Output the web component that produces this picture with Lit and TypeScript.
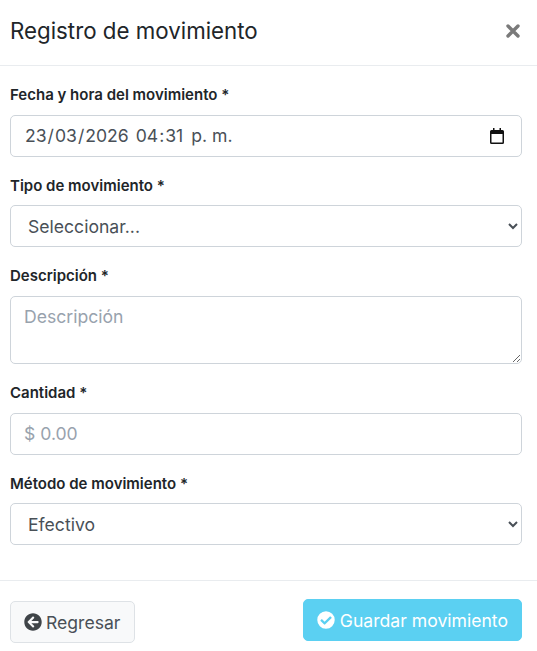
import { LitElement, html, css } from "lit";
import { customElement } from "lit/decorators.js";

@customElement("app-root")
export class AppRoot extends LitElement {
  static styles = css`
    :host { display: block; width: 537px; height: 651px; background: #fff; font-family: Inter, sans-serif; color: #212529; overflow: hidden; }
    * { box-sizing: border-box; }
    .head { height: 66px; border-bottom: 1px solid #e9ecef; display: flex; align-items: center; justify-content: space-between; padding: 0 16px 4px 10px; }
    h1 { margin: 0; font-size: 22.3px; font-weight: 400; }
    .close { width: 16px; height: 16px; }
    .body { padding: 20px 15px 0 10px; display: flex; flex-direction: column; }
    label { display: block; font-size: 15px; font-weight: 600; line-height: 17.5px; margin-bottom: 11px; }
    .ctl { display: block; width: 100%; border: 1px solid #ced4da; border-radius: 5px; height: 42px; font: inherit; font-size: 17.6px; color: #495057; margin: 0 0 20px; background: #fff; outline: none; }
    .ctl::placeholder { color: #98a2ad; opacity: 1; }
    .date { display: flex; align-items: center; justify-content: space-between; padding: 0 16px 0 13px; }
    .segs { white-space: pre; }
    .segs span { padding: 0 1px; }
    .segs .ampm { padding: 0 1px 0 2px; }
    .select { padding: 0 0 0 13px; }
    .area { height: 68.6px; padding: 9px 13px; resize: vertical; }
    .ph { padding: 0 13px; }
    .foot { border-top: 1px solid #e9ecef; display: flex; justify-content: space-between; align-items: flex-start; padding: 18px 15px 0 10px; margin-top: 15px; }
    .btn { font-size: 17.6px; border-radius: 5px; display: flex; align-items: center; gap: 5px; font-family: inherit; height: 42px; }
    .back { padding: 0 13px; gap: 4px; background: #f8f9fa; border: 1px solid #dee2e6; color: #495057; margin-top: 2px; }
    .save { padding: 0 13px; background: #5bd0f2; border: 1px solid #5bd0f2; color: #fff; }
    svg { display: block; flex: none; }
  `;

  render() {
    return html`
      <div class="head">
        <h1>Registro de movimiento</h1>
        <svg class="close" viewBox="0 0 16 16"><path d="M3 3l10 10M13 3L3 13" stroke="#7a7a7a" stroke-width="3.4" stroke-linecap="round"/></svg>
      </div>
      <div class="body">
        <label>Fecha y hora del movimiento *</label>
        <div class="ctl date"><div class="segs"><span>23</span>/<span>03</span>/<span>2026</span> <span>04</span>:<span>31</span> <span class="ampm">p. m.</span></div>
          <svg width="16" height="16" viewBox="0 0 16 16"><path fill="#111" d="M4 0h1.5v2h5V0H12v2h1.500A1.500 1.500 0 0 1 15 3.500v11a1.500 1.500 0 0 1-1.500 1.500h-11A1.500 1.500 0 0 1 1 14.500v-11A1.500 1.500 0 0 1 2.500 2H4zM2.500 6v8.500h11V6z"/></svg>
        </div>
        <label>Tipo de movimiento *</label>
        <select class="ctl select"><option>Seleccionar...</option></select>
        <label>Descripción *</label>
        <textarea class="ctl area" placeholder="Descripción"></textarea>
        <label>Cantidad *</label>
        <input class="ctl ph" placeholder="$ 0.00" />
        <label>Método de movimiento *</label>
        <select class="ctl select"><option>Efectivo</option></select>
      </div>
      <div class="foot">
        <button class="btn back">
          <svg width="18" height="18" viewBox="0 0 512 512"><path fill="#3f4448" d="M256 504C119 504 8 393 8 256S119 8 256 8s248 111 248 248-111 248-248 248zm28.900-143.600L209.400 288H392c13.300 0 24-10.700 24-24v-16c0-13.300-10.700-24-24-24H209.400l75.500-72.400c9.700-9.300 9.900-24.800.4-34.300l-11-10.900c-9.400-9.400-24.600-9.400-33.900 0L107.700 239c-9.400 9.400-9.400 24.600 0 33.900l132.700 132.700c9.400 9.400 24.600 9.400 33.900 0l11-10.900c9.500-9.500 9.300-25-.4-34.300z"/></svg>
          Regresar
        </button>
        <button class="btn save">
          <svg width="18" height="18" viewBox="0 0 512 512"><path fill="#fff" d="M504 256a248 248 0 1 1-496 0 248 248 0 0 1 496 0zM227 387l184-184c6-6 6-16 0-22l-23-23c-6-6-16-6-22 0L216 308l-70-70c-6-6-16-6-22 0l-23 23c-6 6-6 16 0 22l104 104c6 6 16 6 22 0z"/></svg>
          Guardar movimiento
        </button>
      </div>
    `;
  }
}
